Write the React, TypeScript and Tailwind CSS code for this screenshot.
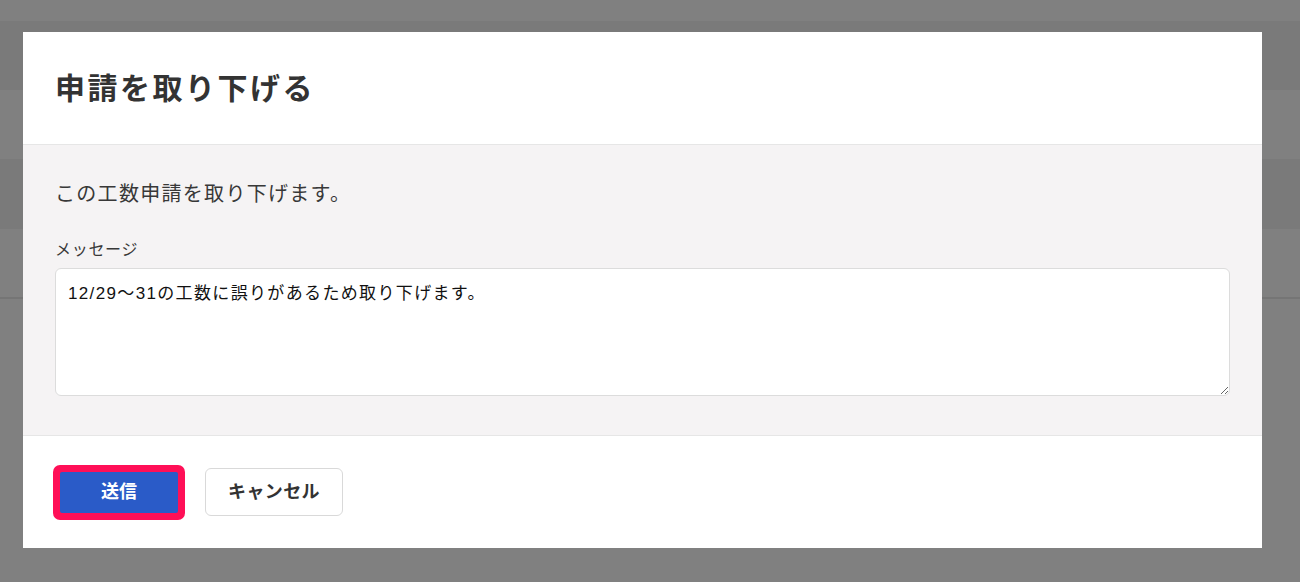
import { useState } from 'react';

const FONT = "font-['Liberation_Sans','Noto_Sans_CJK_JP',sans-serif]";

// faint stripes of the page that sits behind the overlay
const bands = [
  { h: 'h-[21px]', bg: 'bg-[#808080]' },
  { h: 'h-[69px]', bg: 'bg-[#7a7a7a]' },
  { h: 'h-[69px]', bg: 'bg-[#808080]' },
  { h: 'h-[70px]', bg: 'bg-[#7a7a7a]' },
  { h: 'h-[68px]', bg: 'bg-[#808080]' },
  { h: 'h-[2px]', bg: 'bg-[#757575]' },
];

export default function App() {
  const [message, setMessage] = useState('12/29〜31の工数に誤りがあるため取り下げます。');

  return (
    <div className={`relative h-[582px] w-[1300px] overflow-hidden bg-[#808080] ${FONT}`}>
      <div className="flex flex-col">
        {bands.map((band, i) => (
          <div key={i} className={`${band.h} ${band.bg}`} />
        ))}
      </div>

      <div className="absolute left-[23px] top-[32px] flex h-[516px] w-[1239px] flex-col bg-white">
        <header className="flex h-[113px] items-center border-b border-[#e6e6e6] px-8">
          <h1 className="text-[30px] font-bold tracking-[2.5px] text-[#333]">申請を取り下げる</h1>
        </header>

        <section className="flex h-[291px] flex-col border-b border-[#e6e6e6] bg-[#f5f3f4] px-8 pt-[35px]">
          <p className="text-[20px] leading-[28px] tracking-[1.3px] text-[#383838]">
            この工数申請を取り下げます。
          </p>
          <label className="mt-[32px] text-[16px] leading-[20px] tracking-[0.7px] text-[#383838]">
            メッセージ
          </label>
          <textarea
            value={message}
            onChange={(e) => setMessage(e.target.value)}
            className={`mt-[8px] h-[128px] w-full resize-y rounded-[6px] border border-[#dcdcdc] bg-white px-3 py-3 text-[17px] leading-[26px] tracking-[1.35px] text-[#111] outline-none ${FONT}`}
          />
        </section>

        <footer className="flex flex-1 items-center gap-5 px-[30px]">
          <div className="flex h-[55px] w-[132px] items-center justify-center rounded-[7px] bg-[#ff0f57] p-[7px]">
            <button className="flex h-full w-full items-center justify-center rounded-[2px] bg-[#2a5bc8] text-[18px] font-bold text-white">
              送信
            </button>
          </div>
          <button className="flex h-[48px] w-[138px] items-center justify-center rounded-[6px] border border-[#d9d9d9] bg-white text-[18px] font-bold tracking-[0.4px] text-[#333]">
            キャンセル
          </button>
        </footer>
      </div>
    </div>
  );
}
